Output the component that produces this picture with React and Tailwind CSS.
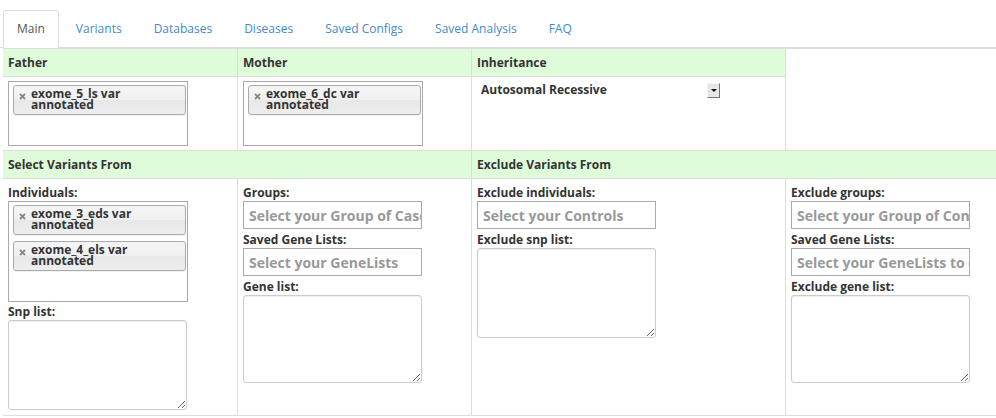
import React from 'react';

const tabs = ['Main', 'Variants', 'Databases', 'Diseases', 'Saved Configs', 'Saved Analysis', 'FAQ'];

const Chip = ({ name }) => (
  <div className="relative ml-[4px] w-[173px] rounded-[3px] border border-[#aaa] bg-[linear-gradient(to_bottom,#f4f4f4_20%,#f0f0f0_50%,#e8e8e8_52%,#eeeeee_100%)] pl-[17px] pr-[5px] pt-[2px] pb-[4px] text-[12px] font-bold leading-[11px] text-[#333] shadow-[0_1px_0_rgba(0,0,0,0.05)]">
    <svg className="absolute left-[5px] top-[7px] h-[7px] w-[7px]" viewBox="0 0 7 7">
      <path d="M1 1L6 6M6 1L1 6" stroke="#888" strokeWidth="1.8" />
    </svg>
    {name} var
    <br />
    annotated
  </div>
);

const MultiBox = ({ items, height }) => (
  <div className={`flex w-[180px] flex-col gap-[6px] border border-[#aaa] bg-white pt-[3px] ${height}`}>
    {items.map((n) => (
      <Chip key={n} name={n} />
    ))}
  </div>
);

const Label = ({ children }) => (
  <div className="text-[12px] font-bold leading-[17px] text-[#333]">{children}</div>
);

const Search = ({ placeholder }) => (
  <div className="mb-[2px] flex h-[28px] w-[179px] items-center overflow-hidden whitespace-nowrap border border-[#aaa] bg-white pl-[5px] text-[14px] font-bold text-[#999]">
    {placeholder}
  </div>
);

const Area = ({ h }) => (
  <textarea
    className={`block w-[179px] rounded-[3px] border border-[#ccc] bg-white shadow-[inset_0_1px_1px_rgba(0,0,0,0.075)] ${h}`}
  />
);

const App = () => {
  return (
    <div className="h-[418px] w-[996px] overflow-hidden bg-white font-['Open_Sans',sans-serif] text-[12px] text-[#333]">
      {/* Tabs */}
      <ul className="flex border-b border-[#ddd] pl-[3px] pt-[10px]">
        {tabs.map((t, i) => (
          <li
            key={t}
            className={`-mb-px mr-[2px] rounded-t-[4px] border pt-[9px] pb-[10px] leading-[17px] ${
              i === 0
                ? 'border-[#ddd] border-b-transparent bg-white px-[13px] text-[#555]'
                : 'border-transparent px-[14px] text-[#428bca]'
            }`}
          >
            {t}
          </li>
        ))}
      </ul>

      {/* Table */}
      <div className="ml-[3px] grid grid-cols-[234px_234px_314px_1fr] grid-rows-[27px_74px_28px_237px] border-t border-b border-[#ddd]">
        <div className="bg-[#dffcda] px-[5px] pt-[5px] font-bold leading-[17px]">Father</div>
        <div className="border-l border-[#ddd] bg-[#dffcda] px-[5px] pt-[5px] font-bold leading-[17px]">Mother</div>
        <div className="border-l border-[#ddd] bg-[#dffcda] px-[5px] pt-[5px] font-bold leading-[17px]">Inheritance</div>
        <div className="row-span-2 border-l border-[#ddd] bg-white"></div>

        <div className="border-t border-[#ddd] px-[5px] pt-[4px]">
          <MultiBox items={['exome_5_ls']} height="h-[65px]" />
        </div>
        <div className="border-t border-l border-[#ddd] px-[5px] pt-[4px]">
          <MultiBox items={['exome_6_dc']} height="h-[65px]" />
        </div>
        <div className="border-t border-l border-[#ddd] pl-[9px] pt-[4px]">
          <div className="flex items-start">
            <span className="w-[226px] font-bold leading-[17px]">Autosomal Recessive</span>
            <div className="mt-[2px] flex h-[15px] w-[13px] items-center justify-center border border-[#f4f4f4] border-r-[#777] border-b-[#777] bg-[#e6e6e6]">
              <svg className="h-[3px] w-[6px]" viewBox="0 0 6 3">
                <path d="M0 0H6L3 3Z" fill="#111" />
              </svg>
            </div>
          </div>
        </div>

        <div className="col-span-2 border-t border-[#ddd] bg-[#dffcda] px-[5px] pt-[5px] font-bold leading-[17px]">
          Select Variants From
        </div>
        <div className="col-span-2 border-t border-l border-[#ddd] bg-[#dffcda] px-[5px] pt-[5px] font-bold leading-[17px]">
          Exclude Variants From
        </div>

        <div className="border-t border-[#ddd] px-[5px] pt-[5px]">
          <Label>Individuals:</Label>
          <MultiBox items={['exome_3_eds', 'exome_4_els']} height="h-[101px] mb-[1px]" />
          <Label>Snp list:</Label>
          <Area h="h-[90px]" />
        </div>
        <div className="border-t border-l border-[#ddd] px-[5px] pt-[5px]">
          <Label>Groups:</Label>
          <Search placeholder="Select your Group of Cases" />
          <Label>Saved Gene Lists:</Label>
          <Search placeholder="Select your GeneLists" />
          <Label>Gene list:</Label>
          <Area h="h-[88px]" />
        </div>
        <div className="border-t border-l border-[#ddd] px-[5px] pt-[5px]">
          <Label>Exclude individuals:</Label>
          <Search placeholder="Select your Controls" />
          <Label>Exclude snp list:</Label>
          <Area h="h-[90px]" />
        </div>
        <div className="border-t border-l border-[#ddd] px-[5px] pt-[5px]">
          <Label>Exclude groups:</Label>
          <Search placeholder="Select your Group of Controls" />
          <Label>Saved Gene Lists:</Label>
          <Search placeholder="Select your GeneLists to exclude" />
          <Label>Exclude gene list:</Label>
          <Area h="h-[88px]" />
        </div>
      </div>
    </div>
  );
};

export default App;
